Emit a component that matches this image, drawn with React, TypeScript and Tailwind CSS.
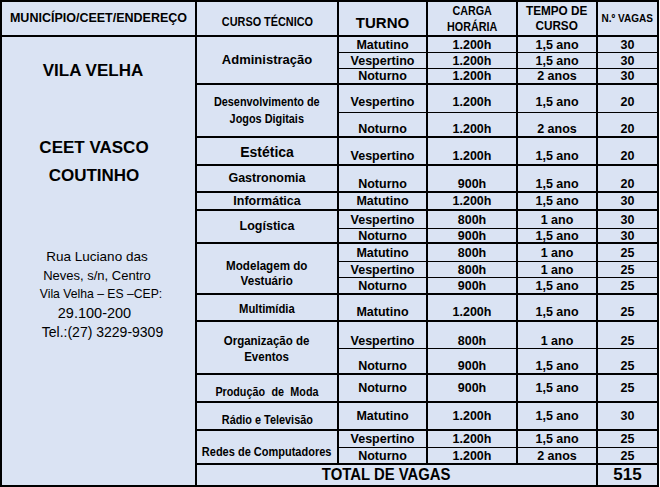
import React from 'react';

type Linha = { turno: string; carga: string; tempo: string; vagas: string; pt?: string };
type Curso = { nome: string[]; cls: string; box: string; linhas: Linha[] };

const cursos: Curso[] = [
    {
        nome: ['Administração'], cls: 'text-[13px]', box: '',
        linhas: [
            { turno: 'Matutino', carga: '1.200h', tempo: '1,5 ano', vagas: '30' },
            { turno: 'Vespertino', carga: '1.200h', tempo: '1,5 ano', vagas: '30' },
            { turno: 'Noturno', carga: '1.200h', tempo: '2 anos', vagas: '30' },
        ],
    },
    {
        nome: ['Desenvolvimento de', 'Jogos Digitais'], cls: 'text-[12.5px] leading-[17px] scale-x-[0.87]', box: '',
        linhas: [
            { turno: 'Vespertino', carga: '1.200h', tempo: '1,5 ano', vagas: '20', pt: 'pt-[7px]' },
            { turno: 'Noturno', carga: '1.200h', tempo: '2 anos', vagas: '20', pt: 'pt-[9px]' },
        ],
    },
    {
        nome: ['Estética'], cls: 'text-[14px]', box: 'pt-[3px]',
        linhas: [{ turno: 'Vespertino', carga: '1.200h', tempo: '1,5 ano', vagas: '20', pt: 'pt-[9px]' }],
    },
    {
        nome: ['Gastronomia'], cls: 'text-[12.5px]', box: '',
        linhas: [{ turno: 'Noturno', carga: '900h', tempo: '1,5 ano', vagas: '20', pt: 'pt-[10px]' }],
    },
    {
        nome: ['Informática'], cls: 'text-[12.5px]', box: '',
        linhas: [{ turno: 'Matutino', carga: '1.200h', tempo: '1,5 ano', vagas: '30' }],
    },
    {
        nome: ['Logística'], cls: 'text-[12.5px]', box: '',
        linhas: [
            { turno: 'Vespertino', carga: '800h', tempo: '1 ano', vagas: '30' },
            { turno: 'Noturno', carga: '900h', tempo: '1,5 ano', vagas: '30' },
        ],
    },
    {
        nome: ['Modelagem do', 'Vestuário'], cls: 'text-[12.5px] leading-[15px] scale-x-[0.93]', box: 'pt-[11px]',
        linhas: [
            { turno: 'Matutino', carga: '800h', tempo: '1 ano', vagas: '25' },
            { turno: 'Vespertino', carga: '800h', tempo: '1 ano', vagas: '25' },
            { turno: 'Noturno', carga: '900h', tempo: '1,5 ano', vagas: '25' },
        ],
    },
    {
        nome: ['Multimídia'], cls: 'text-[12.5px] scale-x-[0.9]', box: 'pt-[3px]',
        linhas: [{ turno: 'Matutino', carga: '1.200h', tempo: '1,5 ano', vagas: '25', pt: 'pt-[8px]' }],
    },
    {
        nome: ['Organização de', 'Eventos'], cls: 'text-[12.5px] leading-[16px] scale-x-[0.92]', box: 'pt-[2px]',
        linhas: [
            { turno: 'Vespertino', carga: '800h', tempo: '1 ano', vagas: '25', pt: 'pt-[11px]' },
            { turno: 'Noturno', carga: '900h', tempo: '1,5 ano', vagas: '25', pt: 'pt-[10px]' },
        ],
    },
    {
        nome: ['Produção de Moda'], cls: 'text-[12.5px] scale-x-[0.86] [word-spacing:4px]', box: 'pt-[9px]',
        linhas: [{ turno: 'Noturno', carga: '900h', tempo: '1,5 ano', vagas: '25' }],
    },
    {
        nome: ['Rádio e Televisão'], cls: 'text-[12.5px] scale-x-[0.87]', box: 'pt-[8px]',
        linhas: [{ turno: 'Matutino', carga: '1.200h', tempo: '1,5 ano', vagas: '30' }],
    },
    {
        nome: ['Redes de Computadores'], cls: 'text-[12.5px] scale-x-[0.88]', box: 'pt-[11px]',
        linhas: [
            { turno: 'Vespertino', carga: '1.200h', tempo: '1,5 ano', vagas: '25' },
            { turno: 'Noturno', carga: '1.200h', tempo: '2 anos', vagas: '25' },
        ],
    },
];

const cell = 'flex items-center justify-center text-center border-r-2 border-black';

export default function App() {
    return (
        <div className="min-h-screen bg-white font-['Liberation_Sans',Arial,sans-serif] text-black">
            <div className="grid w-[659px] grid-cols-[195px_142px_89px_90px_80px_61px] grid-rows-[35px_16px_16px_16px_28px_25px_28px_27px_18px_18px_15px_18px_16px_17px_27px_27px_26px_28px_28px_17px_17px_22px] border-l-2 border-t-2 border-black bg-[#dae3f3] font-bold">
                {/* cabeçalho */}
                <div className={`${cell} border-b-2`}>
                    <span className="text-[12.5px] whitespace-nowrap">MUNICÍPIO/CEET/ENDEREÇO</span>
                </div>
                <div className={`${cell} border-b-2 pt-[7px]`}>
                    <span className="inline-block text-[12.5px] whitespace-nowrap scale-x-[0.87]">CURSO TÉCNICO</span>
                </div>
                <div className={`${cell} border-b-2 pt-[9px]`}>
                    <span className="text-[15px]">TURNO</span>
                </div>
                <div className={`${cell} border-b-2`}>
                    <span className="inline-block text-[12.5px] leading-[16px] scale-x-[0.86]">CARGA<br />HORÁRIA</span>
                </div>
                <div className={`${cell} border-b-2`}>
                    <span className="inline-block text-[12.5px] leading-[15px] scale-x-[0.94]">TEMPO DE<br />CURSO</span>
                </div>
                <div className={`${cell} border-b-2`}>
                    <span className="inline-block text-[11px] whitespace-nowrap scale-x-[0.91]">N.º VAGAS</span>
                </div>

                {/* município / ceet / endereço */}
                <div className="row-span-21 flex flex-col items-center border-r-2 border-b-2 border-black text-center">
                    <div className="mt-[22px] pr-[11px] text-[17px] leading-[24px]">VILA VELHA</div>
                    <div className="mt-[51px] pr-[9px] text-[17px] leading-[28px]">CEET VASCO<br />COUTINHO</div>
                    <div className="mt-[57px] font-normal leading-[19px]">
                        <div className="pr-[3px] text-[13.5px]">Rua Luciano das</div>
                        <div className="pr-[3px] text-[13px]">Neves, s/n, Centro</div>
                        <div className="pl-[5px] text-[12.2px]">Vila Velha – ES –CEP:</div>
                        <div className="pr-[8px] text-[14.5px]">29.100-200</div>
                        <div className="pl-[8px] text-[14px]">Tel.:(27) 3229-9309</div>
                    </div>
                </div>

                {cursos.map((c) => (
                    <React.Fragment key={c.nome.join(' ')}>
                        <div className={`${cell} border-b-2 ${c.box} ${c.linhas.length === 3 ? 'row-span-3' : c.linhas.length === 2 ? 'row-span-2' : ''}`}>
                            <span className={`inline-block whitespace-nowrap ${c.cls}`}>
                                {c.nome.map((n, i) => (
                                    <React.Fragment key={n}>
                                        {i > 0 && <br />}
                                        {n}
                                    </React.Fragment>
                                ))}
                            </span>
                        </div>
                        {c.linhas.map((l, i) => {
                            const last = i === c.linhas.length - 1 ? 'border-b-2' : 'border-b';
                            return (
                                <React.Fragment key={l.turno}>
                                    {[l.turno, l.carga, l.tempo, l.vagas].map((v, j) => (
                                        <div key={j} className={`${cell} ${last} ${l.pt ?? ''} text-[12.5px] leading-[14px]`}>
                                            {v}
                                        </div>
                                    ))}
                                </React.Fragment>
                            );
                        })}
                    </React.Fragment>
                ))}

                {/* total */}
                <div className={`${cell} col-span-4 border-b-2 pr-[21px]`}>
                    <span className="inline-block text-[16px] whitespace-nowrap scale-x-[0.93]">TOTAL DE VAGAS</span>
                </div>
                <div className={`${cell} border-b-2`}>
                    <span className="text-[17px]">515</span>
                </div>
            </div>
        </div>
    );
}
